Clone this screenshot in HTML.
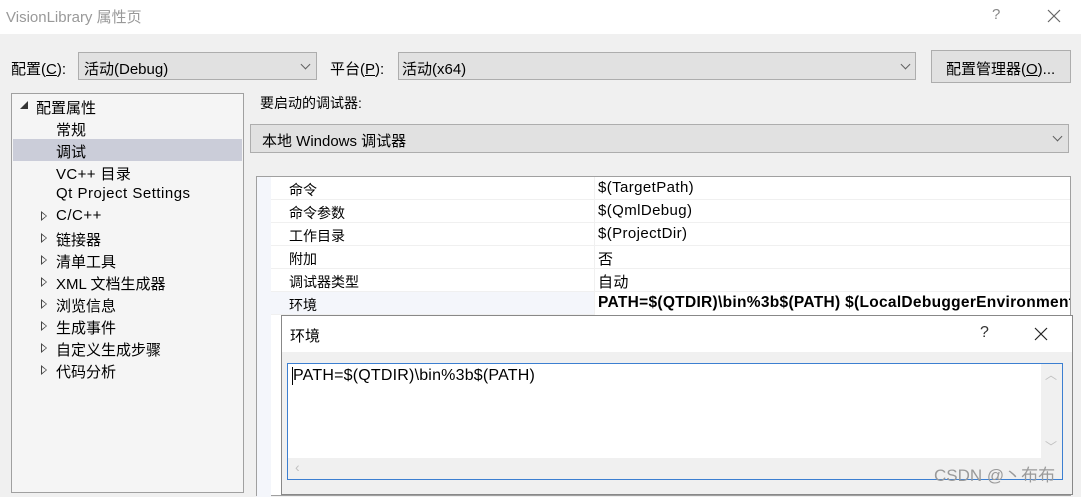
<!DOCTYPE html>
<html><head><meta charset="utf-8"><style>
*{margin:0;padding:0;box-sizing:border-box}
body{width:1081px;height:490px;overflow:hidden;background:#f0f0f0;font-family:"Liberation Sans","Noto Sans CJK SC",sans-serif;font-size:14px;color:#000;position:relative}
.a{position:absolute;white-space:nowrap}
.cb{position:absolute;background:#e1e1e1;border:1px solid #adadad}
.chev{position:absolute;width:7px;height:7px;border-right:1px solid #606060;border-bottom:1px solid #606060;transform:rotate(45deg)}
.tri{position:absolute;width:0;height:0;border-top:5px solid transparent;border-bottom:5px solid transparent;border-left:6px solid #444}
.tri i{position:absolute;left:-5px;top:-3px;border-top:3px solid transparent;border-bottom:3px solid transparent;border-left:4px solid #f5f5f5}
.row{position:absolute;left:271px;width:799px;height:23px;border-bottom:1px solid #f0f0f0;background:#fff}
.row span{position:absolute;top:3px;white-space:nowrap}
.row span+span{font-size:15px;letter-spacing:.4px;top:2px}
</style></head><body>
<div class="a" style="left:0;top:0;width:1081px;height:34px;background:#fff"></div>
<div class="a" style="left:6px;top:6px;font-size:15px;color:#999">VisionLibrary 属性页</div>
<div class="a" style="left:992px;top:6px;font-size:15px;color:#888">?</div>
<svg class="a" style="left:1047px;top:9px" width="14" height="14"><path d="M1 1L13 13M13 1L1 13" stroke="#666" stroke-width="1.2"/></svg>

<div class="a" style="left:11px;top:58px;font-size:15px">配置(<u>C</u>):</div>
<div class="cb" style="left:78px;top:52px;width:239px;height:28px"></div>
<div class="a" style="left:84px;top:58px;font-size:15px">活动(Debug)</div>
<div class="chev" style="left:302px;top:61px"></div>
<div class="a" style="left:330px;top:58px;font-size:15px">平台(<u>P</u>):</div>
<div class="cb" style="left:398px;top:52px;width:518px;height:28px"></div>
<div class="a" style="left:402px;top:58px;font-size:15px">活动(x64)</div>
<div class="chev" style="left:902px;top:61px"></div>
<div class="cb" style="left:931px;top:50px;width:140px;height:33px"></div>
<div class="a" style="left:946px;top:58px;font-size:15px">配置管理器(<u>O</u>)...</div>

<div class="a" style="left:11px;top:93px;width:233px;height:400px;background:#f5f5f5;border:1px solid #a0a0a0"></div>
<div class="a" style="left:13px;top:139px;width:229px;height:22px;background:#cbcdd9"></div>
<svg class="a" style="left:20px;top:101px" width="9" height="9"><path d="M8 0L8 8L0 8Z" fill="#333"/></svg>
<div class="a" style="left:36px;top:97px;font-size:15px">配置属性</div>
<div class="a" style="left:56px;top:119px;font-size:15px">常规</div>
<div class="a" style="left:56px;top:141px;font-size:15px">调试</div>
<div class="a" style="left:56px;top:163px;font-size:15px;letter-spacing:.4px">VC++ 目录</div>
<div class="a" style="left:56px;top:185px;font-size:15px;letter-spacing:.5px">Qt Project Settings</div>
<div class="a" style="left:56px;top:207px;font-size:15px;letter-spacing:.5px">C/C++</div>
<div class="a" style="left:56px;top:229px;font-size:15px">链接器</div>
<div class="a" style="left:56px;top:251px;font-size:15px">清单工具</div>
<div class="a" style="left:56px;top:273px;font-size:15px">XML 文档生成器</div>
<div class="a" style="left:56px;top:295px;font-size:15px">浏览信息</div>
<div class="a" style="left:56px;top:317px;font-size:15px">生成事件</div>
<div class="a" style="left:56px;top:339px;font-size:15px">自定义生成步骤</div>
<div class="a" style="left:56px;top:361px;font-size:15px">代码分析</div>
<div class="tri" style="left:41px;top:211px"><i></i></div>
<div class="tri" style="left:41px;top:233px"><i></i></div>
<div class="tri" style="left:41px;top:255px"><i></i></div>
<div class="tri" style="left:41px;top:277px"><i></i></div>
<div class="tri" style="left:41px;top:299px"><i></i></div>
<div class="tri" style="left:41px;top:321px"><i></i></div>
<div class="tri" style="left:41px;top:343px"><i></i></div>
<div class="tri" style="left:41px;top:365px"><i></i></div>

<div class="a" style="left:260px;top:93px;font-size:14px">要启动的调试器:</div>
<div class="cb" style="left:250px;top:124px;width:819px;height:29px"></div>
<div class="a" style="left:262px;top:130px;font-size:15px">本地 Windows 调试器</div>
<div class="chev" style="left:1054px;top:133px"></div>

<div class="a" style="left:256px;top:176px;width:815px;height:320px;background:#fff;border:1px solid #a0a0a0"></div>
<div class="a" style="left:257px;top:177px;width:14px;height:320px;background:#f4f6fb"></div>
<div class="row" style="top:177px"><span style="left:18px">命令</span><span style="left:327px">$(TargetPath)</span></div>
<div class="row" style="top:200px"><span style="left:18px">命令参数</span><span style="left:327px">$(QmlDebug)</span></div>
<div class="row" style="top:223px"><span style="left:18px">工作目录</span><span style="left:327px">$(ProjectDir)</span></div>
<div class="row" style="top:246px"><span style="left:18px">附加</span><span style="left:327px">否</span></div>
<div class="row" style="top:269px"><span style="left:18px">调试器类型</span><span style="left:327px">自动</span></div>
<div class="row" style="top:292px;background:#f4f6fb"><span style="left:18px">环境</span><span style="left:323px;font-weight:bold;font-size:15.5px;letter-spacing:.3px;background:#fff;overflow:hidden;width:476px;top:0;padding-top:2px;padding-left:4px;height:23px">PATH=$(QTDIR)\bin%3b$(PATH) $(LocalDebuggerEnvironment)</span></div>
<div class="a" style="left:594px;top:177px;width:1px;height:138px;background:#f0f0f0"></div>

<div class="a" style="left:281px;top:315px;width:792px;height:180px;background:#f0f0f0;border:1px solid #888"></div>
<div class="a" style="left:282px;top:316px;width:790px;height:36px;background:#fff"></div>
<div class="a" style="left:290px;top:325px;font-size:15px">环境</div>
<div class="a" style="left:980px;top:324px;font-size:16px;color:#333">?</div>
<svg class="a" style="left:1034px;top:327px" width="14" height="14"><path d="M1 1L13 13M13 1L1 13" stroke="#222" stroke-width="1.2"/></svg>
<div class="a" style="left:287px;top:363px;width:776px;height:117px;background:#fff;border:1px solid #3c7fd1"></div>
<div class="a" style="left:1041px;top:364px;width:21px;height:94px;background:#f0f0f0"></div>
<div class="a" style="left:288px;top:458px;width:774px;height:21px;background:#f0f0f0"></div>
<div class="a" style="left:1045px;top:366px;color:#c0c0c0;font-size:12px">︿</div>
<div class="a" style="left:1045px;top:438px;color:#c0c0c0;font-size:12px">﹀</div>
<div class="a" style="left:295px;top:459px;color:#c0c0c0;font-size:14px">‹</div>
<div class="a" style="left:292px;top:367px;font-size:16px;letter-spacing:.2px;border-left:1px solid #000">PATH=$(QTDIR)\bin%3b$(PATH)</div>
<div class="a" style="left:934px;top:461px;font-size:17px;color:#9a9a9a">CSDN @丶布布</div>
</body></html>
